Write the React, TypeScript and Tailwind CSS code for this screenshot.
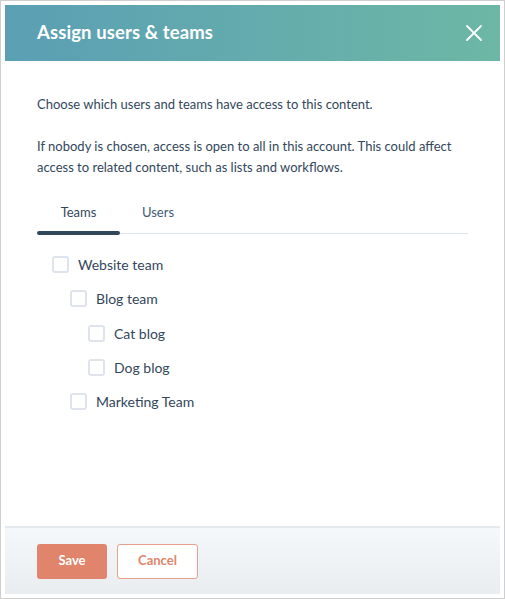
import React from "react";

function Checkbox() {
  return <span className="inline-block w-[17px] h-[17px] rounded-[3px] border-2 border-[#dfe3eb] bg-white shrink-0" />;
}

const items: { label: string; level: number }[] = [
  { label: "Website team", level: 0 },
  { label: "Blog team", level: 1 },
  { label: "Cat blog", level: 2 },
  { label: "Dog blog", level: 2 },
  { label: "Marketing Team", level: 1 },
];

const pad = ["pl-[15px]", "pl-[33px]", "pl-[51px]"];

export default function App() {
  return (
    <div className="w-[505px] h-[599px] bg-white border border-[#cfcfcf] p-[4px] box-border" style={{ fontFamily: "Lato, 'Noto Sans', sans-serif" }}>
      <div className="h-full flex flex-col bg-white">
        <div className="h-[56px] flex items-center justify-between px-[32px] bg-gradient-to-r from-[#5b9fb4] to-[#6cb7a5] shrink-0">
          <h1 className="text-white font-bold text-[18.5px] tracking-[0.1px]">Assign users &amp; teams</h1>
          <svg width="16" height="16" viewBox="0 0 16 16" className="mr-[-14px]">
            <path d="M1 1 L15 15 M15 1 L1 15" stroke="white" strokeWidth="1.8" strokeLinecap="round" />
          </svg>
        </div>
        <div className="flex-1 px-[32px] pt-[33px] text-[#33475b] text-[13px] leading-[21px]">
          <p>Choose which users and teams have access to this content.</p>
          <p className="mt-[21px]">If nobody is chosen, access is open to all in this account. This could affect access to related content, such as lists and workflows.</p>
          <div className="mt-[24px] flex border-b border-[#dfe3eb] relative">
            <div className="w-[83px] text-center pb-[10px] text-[#33475b]">Teams</div>
            <div className="w-[76px] text-center pb-[10px] text-[#425b76]">Users</div>
            <div className="absolute left-0 bottom-[-2px] w-[83px] h-[4px] rounded-full bg-[#33475b]" />
          </div>
          <div className="mt-[22px] flex flex-col gap-[17.25px]">
            {items.map((it) => (
              <div key={it.label} className={`flex items-center gap-[9px] text-[14px] leading-[17px] ${pad[it.level]}`}>
                <Checkbox />
                <span>{it.label}</span>
              </div>
            ))}
          </div>
        </div>
        <div className="h-[68px] border-t-2 border-[#e3e9ef] bg-gradient-to-b from-[#f5f8fa] to-[#eaedf0] flex items-center gap-[10px] px-[32px] shrink-0">
          <button className="w-[70px] h-[35px] rounded-[3px] bg-[#e0856b] text-white font-bold text-[13px]">Save</button>
          <button className="w-[81px] h-[35px] rounded-[3px] border border-[#e9a08c] bg-white text-[#e0856b] font-bold text-[13px]">Cancel</button>
        </div>
      </div>
    </div>
  );
}
